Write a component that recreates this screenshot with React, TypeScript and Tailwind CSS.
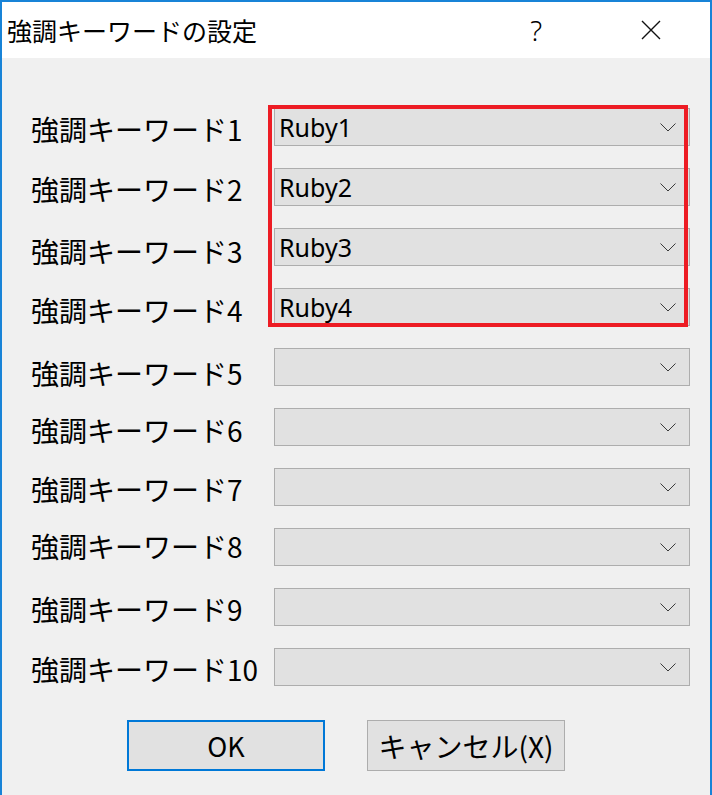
import React from "react";

const rows = [
  { label: "強調キーワード1", value: "Ruby1", shift: "mt-[2px]" },
  { label: "強調キーワード2", value: "Ruby2", shift: "mt-[2px]" },
  { label: "強調キーワード3", value: "Ruby3", shift: "mt-[4px]" },
  { label: "強調キーワード4", value: "Ruby4", shift: "mt-[3px]" },
  { label: "強調キーワード5", value: "", shift: "mt-[6px]" },
  { label: "強調キーワード6", value: "", shift: "mt-[3px]" },
  { label: "強調キーワード7", value: "", shift: "mt-[2px]" },
  { label: "強調キーワード8", value: "", shift: "mt-[-1px]" },
  { label: "強調キーワード9", value: "", shift: "mt-[2px]" },
  { label: "強調キーワード10", value: "", shift: "mt-[2px]" },
];

const jp = { fontFamily: '"Noto Sans CJK JP", "Noto Sans", sans-serif' };

function Chevron() {
  return (
    <svg width="16" height="9" viewBox="0 0 16 9" className="shrink-0">
      <path d="M0.5 0.5 L8 8 L15.5 0.5" fill="none" stroke="#3a3a3a" strokeWidth="1" />
    </svg>
  );
}

function Combo({ value }: { value: string }) {
  return (
    <div className="flex-1 h-[38px] bg-[#e1e1e1] border border-[#adadad] flex items-center pl-[4px] pr-[13px]">
      <span
        className="flex-1 text-[25px] leading-none text-black"
        style={{ fontFamily: '"Noto Sans", sans-serif' }}
      >
        {value}
      </span>
      <Chevron />
    </div>
  );
}

export default function App() {
  return (
    <div
      className="relative w-[712px] h-[795px] bg-[#f0f0f0] border-t-2 border-l-2 border-r-2 border-[#1883d7] overflow-hidden"
      style={jp}
    >
      {/* Title bar */}
      <div className="h-[56px] bg-white flex items-center pl-[5px]">
        <span className="text-[25px] leading-none text-black">強調キーワードの設定</span>
        <span
          className="ml-auto mr-[99px] text-[28px] font-light leading-none text-black"
          style={{ fontFamily: '"Noto Sans", sans-serif' }}
        >
          ?
        </span>
        <svg width="20" height="20" viewBox="0 0 20 20" className="mr-[49px]">
          <path d="M1 1 L19 19 M19 1 L1 19" stroke="#111" strokeWidth="1.4" />
        </svg>
      </div>

      {/* Body */}
      <div className="pt-[50px] pl-[29px] pr-[20px]">
        <div className="flex flex-col gap-[22px]">
          {rows.map((r) => (
            <div key={r.label} className="flex items-start h-[38px]">
              <span className={`w-[243px] shrink-0 text-[28px] leading-[38px] text-black ${r.shift}`}>
                {r.label}
              </span>
              <Combo value={r.value} />
            </div>
          ))}
        </div>

        {/* Buttons */}
        <div className="flex gap-[42px] mt-[34px] pl-[96px]">
          <button className="w-[198px] h-[51px] bg-[#e1e1e1] border-2 border-[#0078d7] text-[27px] leading-none text-black">
            OK
          </button>
          <button className="w-[198px] h-[51px] bg-[#e1e1e1] border border-[#adadad] text-[28px] leading-none text-black">
            キャンセル(X)
          </button>
        </div>
      </div>

      {/* Highlight overlay */}
      <div className="absolute left-[266px] top-[103px] w-[420px] h-[222px] border-4 border-[#ed1c24] pointer-events-none" />
    </div>
  );
}
